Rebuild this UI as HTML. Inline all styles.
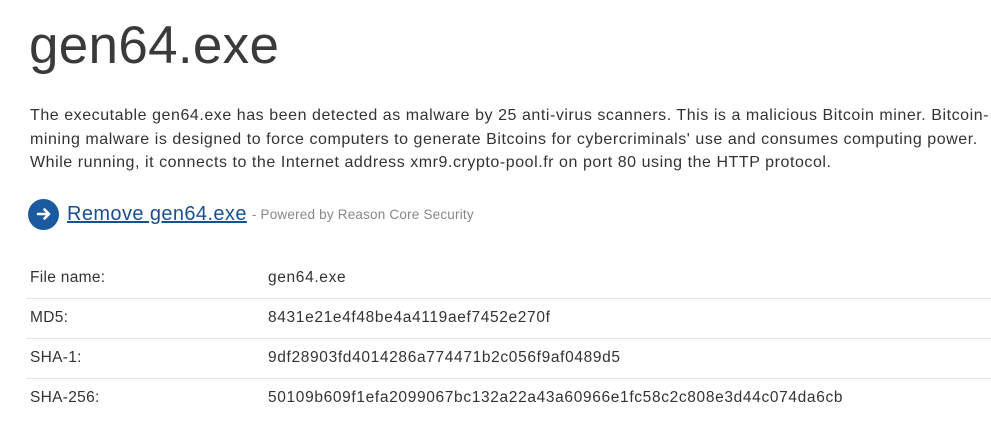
<!DOCTYPE html>
<html><head><meta charset="utf-8"><style>
body{margin:0;background:#fff;font-family:"Liberation Sans",sans-serif;color:#333;width:991px;height:421px;overflow:hidden;position:relative}
h1{position:absolute;left:29px;top:11px;margin:0;font-weight:normal;font-size:53px;line-height:70px;color:#3a3a3a;letter-spacing:0.3px}
.p{position:absolute;left:30px;top:104px;font-size:16px;line-height:23.5px;letter-spacing:0.55px;white-space:nowrap;color:#333}
.rm{position:absolute;left:28px;top:199px;height:30px;display:flex;align-items:center;white-space:nowrap}
.ic{width:31px;height:31px;border-radius:50%;background:#1b5aa0;margin-right:8px;display:flex;align-items:center;justify-content:center}
.rm a{color:#1b4f8e;font-size:20px;text-decoration:underline;letter-spacing:0.4px}
.rm span{color:#888;font-size:13.5px;margin-left:5px;letter-spacing:0.2px}
.row{position:absolute;left:26px;width:965px;height:40px;border-bottom:1px solid #e6e6e6;font-size:15.5px;letter-spacing:0.65px}
.row div{position:absolute;top:11px}
.l{left:4px;letter-spacing:0.3px}.v{left:242px}
</style></head><body>
<h1>gen64.exe</h1>
<div class="p">The executable gen64.exe has been detected as malware by 25 anti-virus scanners. This is a malicious Bitcoin miner. Bitcoin-<br>mining malware is designed to force computers to generate Bitcoins for cybercriminals' use and consumes computing power.<br>While running, it connects to the Internet address xmr9.crypto-pool.fr on port 80 using the HTTP protocol.</div>
<div class="rm"><div class="ic"><svg width="16" height="16" viewBox="0 0 16 16"><path d="M2 8H13M8.5 3.5L13 8L8.5 12.5" stroke="#fff" stroke-width="2.6" fill="none" stroke-linecap="round" stroke-linejoin="round"/></svg></div><a>Remove gen64.exe</a><span>- Powered by Reason Core Security</span></div>
<div class="row" style="top:258px"><div class="l">File name:</div><div class="v">gen64.exe</div></div>
<div class="row" style="top:298px"><div class="l">MD5:</div><div class="v">8431e21e4f48be4a4119aef7452e270f</div></div>
<div class="row" style="top:338px"><div class="l">SHA-1:</div><div class="v">9df28903fd4014286a774471b2c056f9af0489d5</div></div>
<div class="row" style="top:378px;border-bottom:none"><div class="l">SHA-256:</div><div class="v">50109b609f1efa2099067bc132a22a43a60966e1fc58c2c808e3d44c074da6cb</div></div>
</body></html>
